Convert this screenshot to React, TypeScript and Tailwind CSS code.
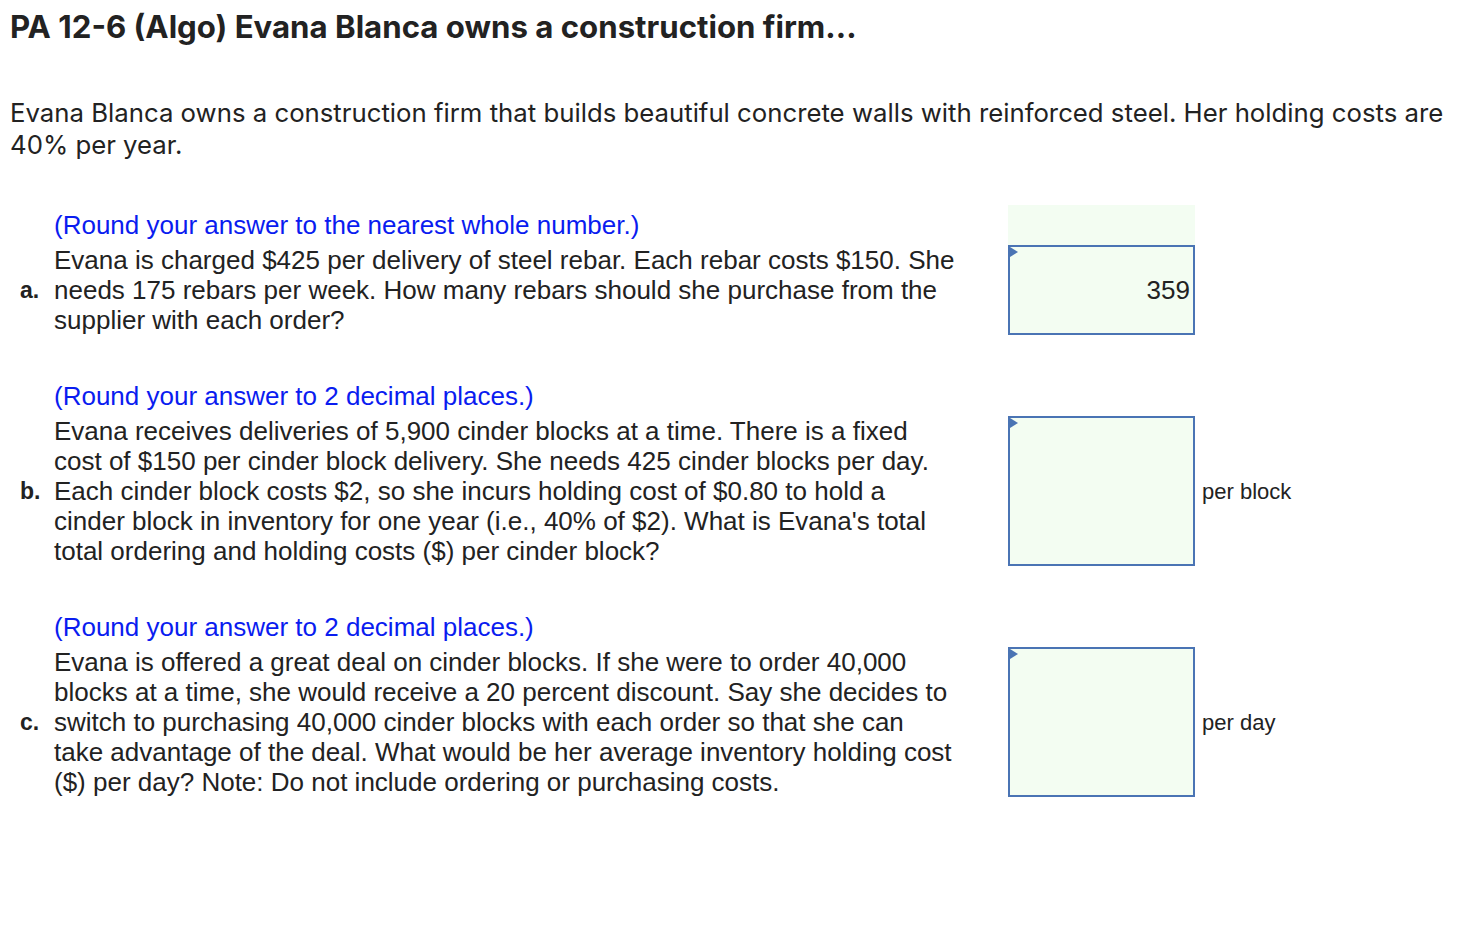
import React from 'react';

type Question = {
  label: string;
  hint: string;
  lines: string[];
  answer?: string;
  unit?: string;
  shadeHint?: boolean;
};

const QUESTIONS: Question[] = [
  {
    label: 'a.',
    hint: '(Round your answer to the nearest whole number.)',
    lines: [
      'Evana is charged $425 per delivery of steel rebar. Each rebar costs $150. She',
      'needs 175 rebars per week. How many rebars should she purchase from the',
      'supplier with each order?',
    ],
    answer: '359',
    shadeHint: true,
  },
  {
    label: 'b.',
    hint: '(Round your answer to 2 decimal places.)',
    lines: [
      'Evana receives deliveries of 5,900 cinder blocks at a time. There is a fixed',
      'cost of $150 per cinder block delivery. She needs 425 cinder blocks per day.',
      'Each cinder block costs $2, so she incurs holding cost of $0.80 to hold a',
      "cinder block in inventory for one year (i.e., 40% of $2). What is Evana's total",
      'total ordering and holding costs ($) per cinder block?',
    ],
    unit: 'per block',
  },
  {
    label: 'c.',
    hint: '(Round your answer to 2 decimal places.)',
    lines: [
      'Evana is offered a great deal on cinder blocks. If she were to order 40,000',
      'blocks at a time, she would receive a 20 percent discount. Say she decides to',
      'switch to purchasing 40,000 cinder blocks with each order so that she can',
      'take advantage of the deal. What would be her average inventory holding cost',
      '($) per day? Note: Do not include ordering or purchasing costs.',
    ],
    unit: 'per day',
  },
];

const AnswerBox: React.FC<{ value?: string }> = ({ value }) => (
  <div className="relative h-full w-[187px] border-2 border-[#4a74b4] bg-[#f3fdf2] flex items-center justify-end pr-[3px]">
    <span className="absolute left-0 top-0 w-0 h-0 border-t-[5px] border-b-[5px] border-l-[8px] border-t-transparent border-b-transparent border-l-[#4a74b4]" />
    {value && <span className="text-[26px] text-[#222]">{value}</span>}
  </div>
);

const QuestionBlock: React.FC<{ q: Question }> = ({ q }) => (
  <div className="grid grid-cols-[54px_954px_194px_auto] font-['Liberation_Sans',Arial,sans-serif]">
    <div />
    <div className="h-[40px] flex items-center text-[26px] text-[#0a1cf0] whitespace-nowrap">{q.hint}</div>
    <div className={q.shadeHint ? 'bg-[#f3fdf2] w-[187px] h-[40px]' : ''} />
    <div />

    <div className="flex items-center pl-[20px] text-[23px] font-bold text-[#222]">{q.label}</div>
    <div className="text-[26px] leading-[30px] text-[#222]">
      {q.lines.map((l, i) => (
        <div key={i} className="whitespace-nowrap">{l}</div>
      ))}
    </div>
    <div>
      <AnswerBox value={q.answer} />
    </div>
    <div className="flex items-center text-[22px] text-[#222] whitespace-nowrap">{q.unit}</div>
  </div>
);

const App: React.FC = () => {
  return (
    <div className="min-h-screen w-[1472px] bg-white text-[#222] pl-[10px]">
      <h1 className="pt-[8px] text-[31.2px] leading-[38px] font-bold font-['Inter','Lato',sans-serif] text-[#222]">
        PA 12-6 (Algo) Evana Blanca owns a construction firm...
      </h1>
      <p className="mt-[51px] text-[25.75px] leading-[32px] font-['Inter','Lato',sans-serif] text-[#222]">
        Evana Blanca owns a construction firm that builds beautiful concrete walls with reinforced steel. Her holding costs are
        <br />
        40% per year.
      </p>
      <div className="-ml-[10px] mt-[44px] flex flex-col gap-[41px]">
        {QUESTIONS.map((q) => (
          <QuestionBlock key={q.label} q={q} />
        ))}
      </div>
    </div>
  );
};

export default App;
